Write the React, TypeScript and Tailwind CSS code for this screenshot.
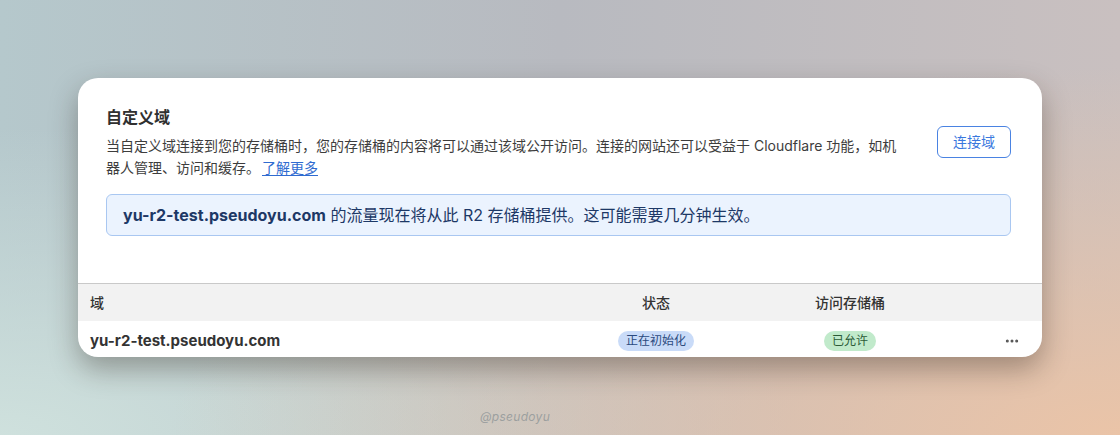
import { MoreHorizontal } from 'lucide-react';

const font = "font-['Inter','Noto_Sans_CJK_SC',sans-serif]";

export default function App() {
  return (
    <div
      className={`${font} flex h-[435px] w-full flex-col items-center overflow-hidden px-[78px] pt-[78px] bg-[radial-gradient(ellipse_at_bottom_right,rgba(236,196,166,0.95),transparent_60%),radial-gradient(ellipse_at_bottom_left,rgba(208,226,222,0.95),transparent_50%),linear-gradient(90deg,#b5c8cc_0%,#b8bac0_50%,#c9c0c0_100%)]`}
    >
      <div className="w-full overflow-hidden rounded-[20px] bg-white shadow-[0_12px_28px_rgba(40,30,20,0.35)]">
        <div className="pl-7 pr-[31px] pt-[27px]">
          <div className="flex items-center justify-between">
            <div className="w-[800px]">
              <h2 className="text-base leading-6 font-semibold text-[#303030]">自定义域</h2>
              <p className="mt-1.5 text-sm leading-[22px] text-[#3d3d3d]">
                当自定义域连接到您的存储桶时，您的存储桶的内容将可以通过该域公开访问。连接的网站还可以受益于 Cloudflare 功能，如机器人管理、访问和缓存。
                <a className="ml-0.5 text-[#2f6bd0] underline underline-offset-2">了解更多</a>
              </p>
            </div>
            <button className="h-8 w-[74px] rounded-md border border-[#4a83e2] text-sm text-[#3a78de]">
              连接域
            </button>
          </div>

          <div className="mt-[15px] rounded-md border border-[#a9c7f1] bg-[#ebf3fe] px-4 py-2 text-base leading-6 text-[#1d3866]">
            <span className="font-bold">yu-r2-test.pseudoyu.com</span> 的流量现在将从此 R2 存储桶提供。这可能需要几分钟生效。
          </div>
        </div>

        <div className="mt-[47px]">
          <div className="grid h-[38px] grid-cols-[472px_188px_200px_1fr] items-center border-t border-[#c9c9c9] bg-[#f2f2f2] px-3 text-sm font-medium text-[#333]">
            <span>域</span>
            <span className="text-center">状态</span>
            <span className="text-center">访问存储桶</span>
            <span />
          </div>
          <div className="grid h-9 grid-cols-[472px_188px_200px_1fr] items-center px-3 pt-1">
            <span className="text-[15px] font-bold text-[#333]">yu-r2-test.pseudoyu.com</span>
            <span className="flex justify-center">
              <span className="rounded-full bg-[#c9dbf8] px-2 text-xs leading-5 text-[#2b4a7e]">正在初始化</span>
            </span>
            <span className="flex justify-center">
              <span className="rounded-full bg-[#c1eacb] px-2 text-xs leading-5 text-[#2c5a37]">已允许</span>
            </span>
            <span className="flex justify-end pr-2.5 text-[#555]">
              <MoreHorizontal size={16} strokeWidth={2.5} />
            </span>
          </div>
        </div>
      </div>

      <div className="mr-[90px] mt-[52px] text-xs italic tracking-wide text-[#8e9597]/80">@pseudoyu</div>
    </div>
  );
}
